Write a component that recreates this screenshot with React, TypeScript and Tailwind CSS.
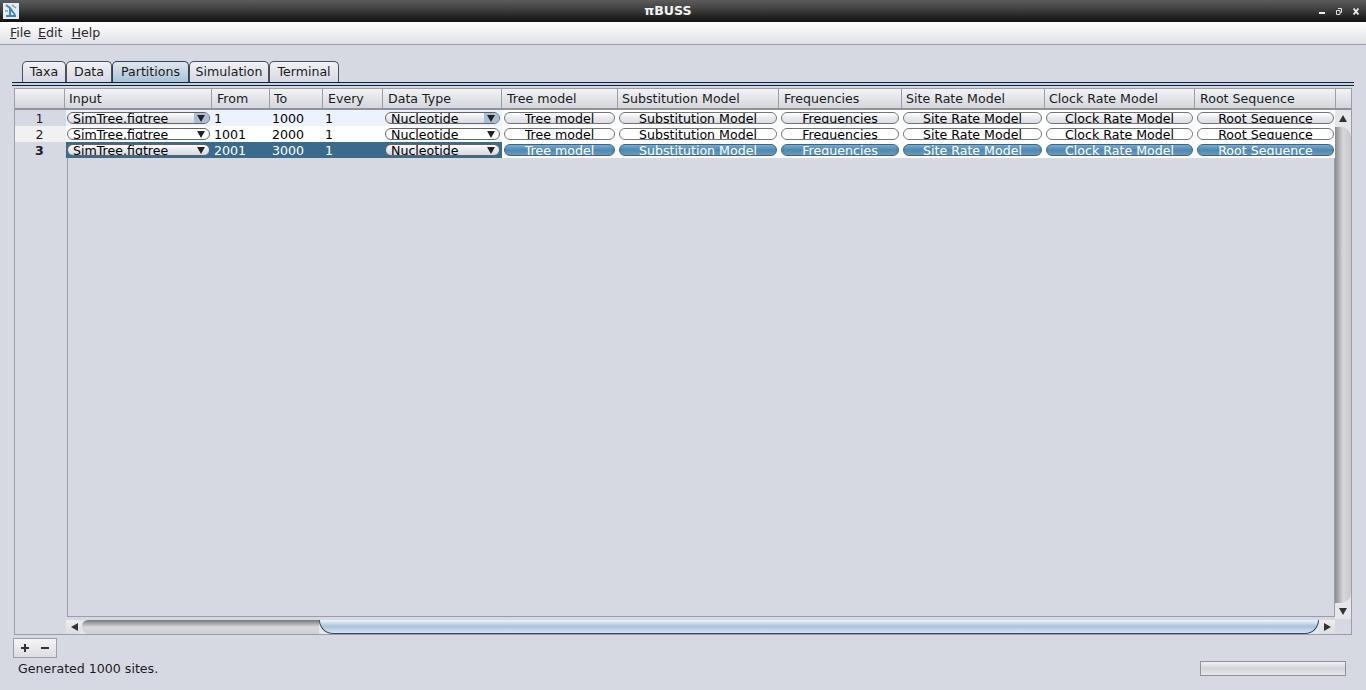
const font = "[font-family:'DejaVu_Sans',sans-serif]";

const columns = [
  { label: "Input", width: "w-[147px]", head: "pl-[4px]", cell: "" },
  { label: "From", width: "w-[58px]", head: "pl-[5px]", cell: "" },
  { label: "To", width: "w-[53px]", head: "pl-[4px]", cell: "" },
  { label: "Every", width: "w-[60px]", head: "pl-[5px]", cell: "" },
  { label: "Data Type", width: "w-[119px]", head: "pl-[5px]", cell: "" },
  { label: "Tree model", width: "w-[116px]", head: "pl-[5px]", cell: "pl-[2px] pr-[3px]" },
  { label: "Substitution Model", width: "w-[161px]", head: "pl-[4px]", cell: "pl-[1px] pr-[2px]" },
  { label: "Frequencies", width: "w-[123px]", head: "pl-[5px]", cell: "pl-[2px] pr-[3px]" },
  { label: "Site Rate Model", width: "w-[143px]", head: "pl-[4px]", cell: "pl-[1px] pr-[3px]" },
  { label: "Clock Rate Model", width: "w-[150px]", head: "pl-[4px]", cell: "pl-[1px] pr-[2px]" },
  { label: "Root Sequence", width: "w-[141px]", head: "pl-[5px]", cell: "pl-[2px] pr-[2px]" },
];

const rows = [
  { id: 1, from: "1", to: "1000", every: "1" },
  { id: 2, from: "1001", to: "2000", every: "1" },
  { id: 3, from: "2001", to: "3000", every: "1" },
];

const tabs = [
  { label: "Taxa", width: "w-[44px]" },
  { label: "Data", width: "w-[46px]" },
  { label: "Partitions", width: "w-[77px]" },
  { label: "Simulation", width: "w-[80px]" },
  { label: "Terminal", width: "w-[70px]" },
];

const Combo = ({ text, width, row }: { text: string; width: string; row: number }) => (
  <div
    className={`${width} h-3 rounded-[6px] border border-[#5f636b] ${row === 2 ? "bg-white" : "bg-gradient-to-b from-white via-[#e8e9ed] to-[#d8dae0]"} flex items-center overflow-hidden pl-[5px] shrink-0`}
  >
    <span className="flex-1 text-black leading-[14px] h-3 overflow-hidden whitespace-nowrap">{text}</span>
    <span className={`w-[15px] h-full flex items-center justify-center pr-[2px] ${row === 1 ? "bg-[#a9bfd6]" : ""}`}>
      <svg width="8" height="7" viewBox="0 0 9 8">
        <path d="M0 0h9L4.500 8z" fill="#222" />
      </svg>
    </span>
  </div>
);

const PillButton = ({ label, row }: { label: string; row: number }) => (
  <div
    className={`flex-1 h-3 rounded-[6px] border flex items-center justify-center overflow-hidden whitespace-nowrap ${
      row === 3
        ? "border-[#3c6483] bg-gradient-to-b from-[#7aaccd] via-[#4f87ae] to-[#659dc3] text-white"
        : row === 1
          ? "border-[#70747c] bg-gradient-to-b from-white via-[#e8e9ed] to-[#dcdee4] text-black"
          : "border-[#70747c] bg-white text-black"
    }`}
  >
    <span className="h-3 overflow-hidden leading-[14px]">{label}</span>
  </div>
);

const TableRow = ({ row }: { row: (typeof rows)[number] }) => {
  const bg = row.id === 3 ? "bg-[#3a6a8c] text-white" : row.id === 1 ? "bg-[#edf3fe] text-black" : "bg-white text-black";
  return (
    <div className="flex h-4">
      <div
        className={`w-[51px] shrink-0 text-center leading-[18px] pr-[2px] ${row.id === 2 ? "bg-[#f1f1f1]" : ""} ${row.id === 3 ? "font-bold" : ""}`}
      >
        {row.id}
      </div>
      <div className={`flex items-center ${bg}`}>
        <div className="w-[146px] flex pl-[1px] shrink-0">
          <Combo text="SimTree.figtree" width="w-[143px]" row={row.id} />
        </div>
        <div className="w-[58px] h-4 pl-[2px] shrink-0 leading-[18px]">{row.from}</div>
        <div className="w-[53px] h-4 pl-[2px] shrink-0 leading-[18px]">{row.to}</div>
        <div className="w-[60px] h-4 pl-[2px] shrink-0 leading-[18px]">{row.every}</div>
        <div className="w-[119px] flex pl-[2px] shrink-0">
          <Combo text="Nucleotide" width="w-[115px]" row={row.id} />
        </div>
      </div>
      <div className="flex items-center bg-white">
        {columns.slice(5).map((c) => (
          <div key={c.label} className={`${c.width} ${c.cell} flex shrink-0`}>
            <PillButton label={c.label} row={row.id} />
          </div>
        ))}
      </div>
    </div>
  );
};

export default function App() {
  return (
    <div className={`${font} w-[1366px] h-[690px] overflow-hidden bg-[#d6d9e2] text-[12.6px] text-[#1c1c1c] flex flex-col`}>
      {/* Window title */}
      <div className="h-[22px] shrink-0 bg-gradient-to-b from-[#5c5c5c] via-[#3a3a3a] to-[#111] flex items-center pr-[7px]">
        <div className="ml-[3px] w-4 h-4 overflow-hidden">
          <svg width="16" height="16" viewBox="0 0 16 16">
            <rect width="16" height="16" fill="#e4ebf1" />
            <path d="M3 2l4 3v8M7 5l5 7M3 13h10" stroke="#3d86c0" strokeWidth="2" fill="none" />
            <path d="M9 2l4 3M2 8h3" stroke="#8c9aa5" strokeWidth="1.500" />
          </svg>
        </div>
        <div className="flex-1 text-center font-bold text-[#f2f2f2] pr-[2px]">πBUSS</div>
        <div className="flex items-center gap-[11px]">
          <svg width="6" height="7" viewBox="0 0 6 7">
            <rect x="0" y="4" width="6" height="2" fill="#eee" />
          </svg>
          <svg width="6" height="7" viewBox="0 0 6 7">
            <path d="M2 .5h3.500v4H4M.5 2.500h3.500v4H.5z" stroke="#ddd" fill="none" />
          </svg>
          <svg width="6" height="7" viewBox="0 0 6 7">
            <path d="M.5 .5l5 6M5.500 .5l-5 6" stroke="#eee" strokeWidth="1.800" />
          </svg>
        </div>
      </div>

      {/* Menu */}
      <div className="h-[23px] shrink-0 bg-gradient-to-b from-white to-[#dfe1e6] border-b border-[#9b9ea6] flex items-center pl-[10px] gap-[7px] text-[#2a2a2a]">
        <span><span className="underline">F</span>ile</span>
        <span><span className="underline">E</span>dit</span>
        <span className="ml-[2px]"><span className="underline">H</span>elp</span>
      </div>

      {/* Tabs */}
      <div className="flex pl-[22px] h-[37px] shrink-0 items-end">
        {tabs.map((t) => (
          <div
            key={t.label}
            className={`${t.width} h-[21px] text-center border border-b-0 rounded-t-[5px] leading-[20px] ${
              t.label === "Partitions"
                ? "border-[#2a4258] bg-gradient-to-b from-[#e3e7ec] to-[#a8c3d9]"
                : "border-[#4b4f57] bg-gradient-to-b from-[#f0f1f4] to-[#d6d9e2]"
            }`}
          >
            {t.label}
          </div>
        ))}
      </div>
      <div className="ml-[12px] w-[1342px] h-[4px] border-y border-[#0e2438] bg-[#c4d2df] shrink-0" />

      {/* Table */}
      <div className="ml-[14px] mt-[2px] w-[1338px] h-[547px] border border-[#9b9ea6] flex flex-col shrink-0">
        <div className="flex h-[21px] shrink-0 border-b-2 border-[#8f929a] bg-gradient-to-b from-[#f2f3f5] to-[#d4d6dd]">
          <div className="w-[50px] border-r border-[#9b9ea6] shrink-0" />
          {columns.map((c) => (
            <div key={c.label} className={`${c.width} ${c.head} shrink-0 border-r border-[#9b9ea6] leading-[19px] whitespace-nowrap`}>
              {c.label}
            </div>
          ))}
          <div className="flex-1" />
        </div>

        <div className="flex flex-1 min-h-0">
          <div className="flex flex-col w-[1320px] shrink-0">
            {rows.map((r) => (
              <TableRow key={r.id} row={r} />
            ))}
            <div className="flex flex-1 min-h-0">
              <div className="w-[52px] shrink-0" />
              <div className="flex-1 border border-t-0 border-[#9b9ea6]" />
            </div>
            <div className="h-[3px] shrink-0" />
            {/* Horizontal scrollbar */}
            <div className="h-[14px] shrink-0 ml-[51px] flex bg-[#e6e7ea]">
              <div className="w-[16px] rounded-r-[6px] bg-gradient-to-b from-[#eeeef0] to-[#dcdde1] flex items-center justify-center">
                <svg width="7" height="8" viewBox="0 0 7 8"><path d="M7 0v8L0 4z" fill="#333" /></svg>
              </div>
              <div className="w-[237px] rounded-l-[6px] bg-gradient-to-b from-[#77787c] via-[#d8d8da] to-[#d0d0d3]" />
              <div className="flex-1 rounded-b-[14px] border-x border-b border-[#2c4a66] bg-gradient-to-b from-[#f0f4f8] via-[#a9c3d9] to-[#d7e6f1]" />
              <div className="w-[16px] bg-gradient-to-b from-[#eeeef0] to-[#dcdde1] flex items-center justify-center">
                <svg width="7" height="8" viewBox="0 0 7 8"><path d="M0 0v8l7-4z" fill="#333" /></svg>
              </div>
            </div>
          </div>

          {/* Vertical scrollbar */}
          <div className="flex-1 flex flex-col pb-[15px]">
            <div className="flex-1 flex flex-col min-h-0 bg-[#e6e7ea]">
              <div className="h-[17px] flex items-center justify-center">
                <svg width="8" height="7" viewBox="0 0 8 7"><path d="M0 7h8L4 0z" fill="#333" /></svg>
              </div>
              <div className="flex-1 rounded-r-[10px] bg-gradient-to-r from-[#8a8b8f] via-[#d8d8da] to-[#c8c8cb]" />
              <div className="h-[16px] flex items-center justify-center">
                <svg width="8" height="7" viewBox="0 0 8 7"><path d="M0 0h8L4 7z" fill="#333" /></svg>
              </div>
            </div>
          </div>
        </div>
      </div>

      {/* Add / remove */}
      <div className="ml-[13px] mt-[3px] w-[44px] h-[20px] border border-[#9b9ea6] bg-gradient-to-b from-[#f5f5f7] to-[#dcdde2] flex items-center justify-center gap-[10px] shrink-0">
        <svg width="10" height="10" viewBox="0 0 10 10"><path d="M5 1v8M1 5h8" stroke="#333" strokeWidth="2" /></svg>
        <svg width="10" height="10" viewBox="0 0 10 10"><path d="M1 5h8" stroke="#333" strokeWidth="2" /></svg>
      </div>

      {/* Status */}
      <div className="flex items-center justify-between pl-[18px] pr-[20px] mt-[1px]">
        <span className="pt-[1px]">Generated 1000 sites.</span>
        <div className="w-[146px] h-[15px] border border-[#8f929a] bg-gradient-to-b from-[#f0f0f2] via-[#d4d5d8] to-[#e8e8ea]" />
      </div>
    </div>
  );
}
